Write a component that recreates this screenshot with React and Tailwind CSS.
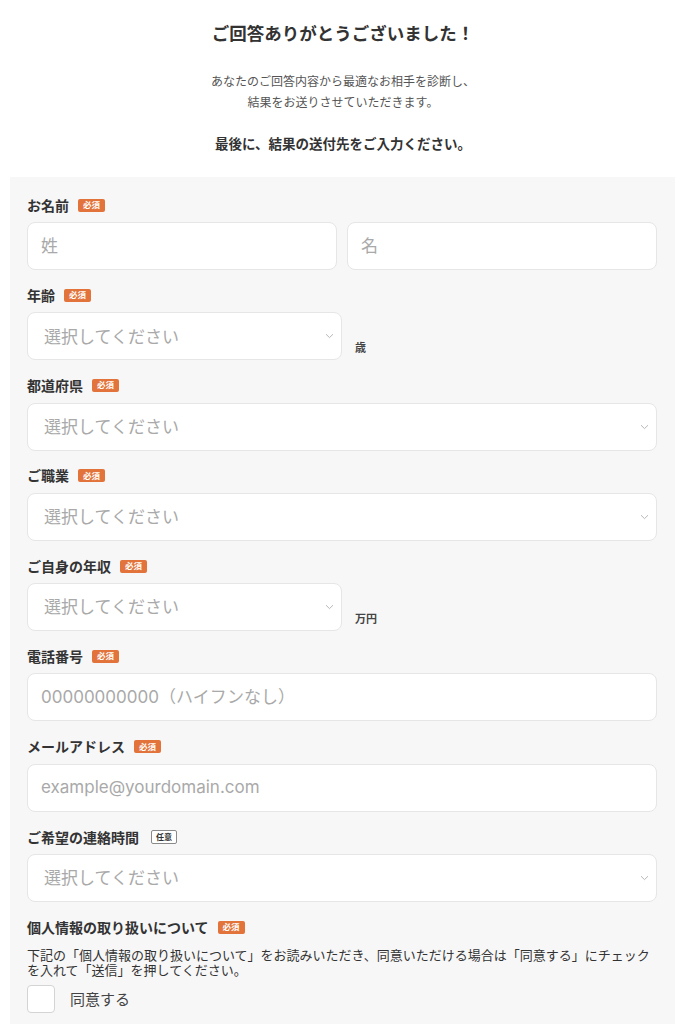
import React from "react";

const FONT = { fontFamily: '"Noto Sans", "Noto Sans CJK JP", sans-serif' };
const LATIN = { fontFamily: 'Inter, "Noto Sans CJK JP", sans-serif' };

function Req() {
  return (
    <span className="ml-[9px] inline-flex h-[13px] items-center rounded-[2px] bg-[#e2733a] px-[5px] text-[8.5px] font-bold leading-none text-white">
      必須
    </span>
  );
}
function Opt() {
  return (
    <span className="ml-[12px] inline-flex h-[14px] items-center rounded-[2px] border border-[#8a8a8a] bg-white px-[4px] text-[8px] font-bold leading-none text-[#333]">
      任意
    </span>
  );
}

function Label({ text, optional }) {
  return (
    <div className="flex h-[20px] items-center text-[14px] font-bold text-[#333]">
      <span>{text}</span>
      {optional ? <Opt /> : <Req />}
    </div>
  );
}

function Chevron() {
  return (
    <svg width="9" height="6" viewBox="0 0 9 6" className="shrink-0">
      <path d="M1 1.2 L4.5 4.6 L8 1.2" fill="none" stroke="#b8b8b8" strokeWidth="1" />
    </svg>
  );
}

function Box({ children, className = "", style }) {
  return (
    <div
      style={style}
      className={
        "flex h-[48px] items-center rounded-[8px] border border-[#e6e6e6] bg-white pl-[13px] pr-[7px] text-[17px] text-[#a9a9a9] " +
        className
      }
    >
      {children}
    </div>
  );
}

function Select({ className = "" }) {
  return (
    <Box className={"justify-between pl-[16px] " + className}>
      <span>選択してください</span>
      <Chevron />
    </Box>
  );
}

function Field({ label, optional, children }) {
  return (
    <div className="mb-[15.3px]">
      <Label text={label} optional={optional} />
      <div className="mt-[7px]">{children}</div>
    </div>
  );
}

export default function App() {
  return (
    <div className="min-h-[1024px] bg-white text-[#333]" style={FONT}>
      <div className="pt-[22px] text-center">
        <h1 className="text-[17.5px] font-bold leading-[22px] text-[#333]">ご回答ありがとうございました！</h1>
        <p className="mt-[27px] text-[12px] leading-[21px] text-[#555]">
          あなたのご回答内容から最適なお相手を診断し、
          <br />
          結果をお送りさせていただきます。
        </p>
        <p className="mt-[21px] text-[13.5px] font-bold leading-[20px] text-[#333]">
          最後に、結果の送付先をご入力ください。
        </p>
      </div>

      <div className="ml-[10px] mr-[11px] mt-[23px] bg-[#f7f7f7] pb-[20px] pl-[17px] pr-[18px] pt-[18px]">
        <Field label="お名前">
          <div className="flex gap-[10px]">
            <Box className="flex-1">姓</Box>
            <Box className="flex-1">名</Box>
          </div>
        </Field>

        <Field label="年齢">
          <div className="flex items-end">
            <Select className="w-[315px]" />
            <span className="mb-[4px] ml-[13px] text-[11px] font-bold text-[#444]">歳</span>
          </div>
        </Field>

        <Field label="都道府県">
          <Select />
        </Field>

        <Field label="ご職業">
          <Select />
        </Field>

        <Field label="ご自身の年収">
          <div className="flex items-end">
            <Select className="w-[315px]" />
            <span className="mb-[4px] ml-[13px] text-[11px] font-bold text-[#444]">万円</span>
          </div>
        </Field>

        <Field label="電話番号">
          <Box className="text-[17.8px]" style={LATIN}>00000000000（ハイフンなし）</Box>
        </Field>

        <Field label="メールアドレス">
          <Box className="text-[17.8px]" style={LATIN}>example@yourdomain.com</Box>
        </Field>

        <Field label="ご希望の連絡時間" optional>
          <Select />
        </Field>

        <div>
          <Label text="個人情報の取り扱いについて" />
          <p className="mt-[11px] text-[13px] leading-[15px] text-[#333]">
            下記の「個人情報の取り扱いについて」をお読みいただき、同意いただける場合は「同意する」にチェックを入れて「送信」を押してください。
          </p>
          <div className="mt-[7px] flex items-center">
            <div className="h-[28px] w-[28px] rounded-[4px] border border-[#d4d4d4] bg-white" />
            <span className="ml-[15px] text-[15px] text-[#444]">同意する</span>
          </div>
        </div>
      </div>
    </div>
  );
}
